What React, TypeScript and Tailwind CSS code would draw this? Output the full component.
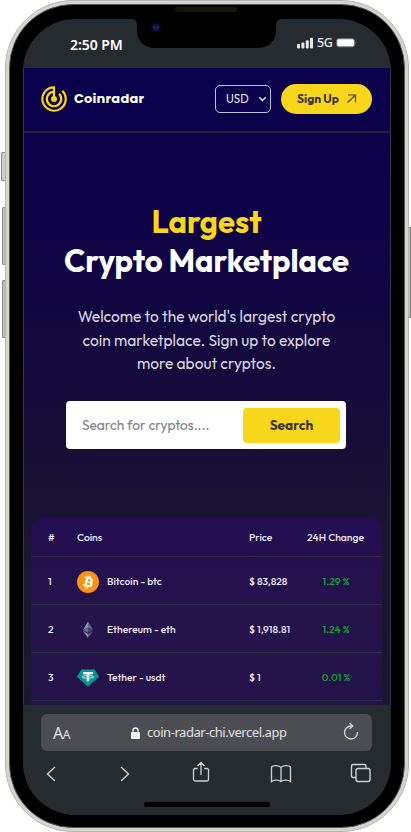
import React from "react";

const coins = [
  { rank: 1, name: "Bitcoin - btc", price: "$ 83,828", change: "1.29 %" },
  { rank: 2, name: "Ethereum - eth", price: "$ 1,918.81", change: "1.24 %" },
  { rank: 3, name: "Tether - usdt", price: "$ 1", change: "0.01 %" },
];

function Bitcoin() {
  return (
    <svg className="h-[22px] w-[22px]" viewBox="0 0 32 32">
      <circle cx="16" cy="16" r="16" fill="#f7931a" />
      <path
        fill="#fff"
        d="M23.2 14c.3-2.100-1.300-3.200-3.500-4l.7-2.800-1.700-.4-.7 2.700-1.400-.3.700-2.800-1.700-.4-.7 2.800-3.500-.9-.5 1.900 1.300.3c.7.200.8.600.8 1l-1.900 7.700c-.1.200-.3.500-.8.400l-1.200-.3-.9 2 3.400.8-.7 2.900 1.700.4.7-2.800 1.400.3-.7 2.800 1.700.4.7-2.800c2.900.5 5.100.3 6-2.300.8-2.100 0-3.300-1.500-4.100 1.100-.3 1.900-1 2.300-2.500zm-3.800 5.400c-.5 2.100-4.100 1-5.200.7l.9-3.800c1.200.3 4.900.9 4.300 3.100zm.5-5.400c-.5 1.900-3.400.9-4.400.7l.8-3.400c1 .2 4.100.7 3.600 2.700z"
      />
    </svg>
  );
}

function Ethereum() {
  return (
    <svg className="h-[22px] w-[22px]" viewBox="0 0 22 22">
      <path d="M11 2.500 5.900 11 11 8.800Z" fill="#8890b3" />
      <path d="M11 2.500 16.100 11 11 8.800Z" fill="#62688f" />
      <path d="M5.900 11 11 8.800V14Z" fill="#62688f" />
      <path d="M16.100 11 11 8.800V14Z" fill="#3d436c" />
      <path d="m5.900 12.100 5.100 3v4Z" fill="#8890b3" />
      <path d="m16.100 12.100-5.100 3v4Z" fill="#555b85" />
    </svg>
  );
}

function Tether() {
  return (
    <svg className="h-[22px] w-[22px]" viewBox="0 0 22 22">
      <path d="M4.300 2.600h13.400L22 9.800 11 19.700 0 9.800Z" fill="#0b9492" />
      <path d="M6.100 5.100h9.800v2.200h-3.700v7h-2.400v-7H6.100Z" fill="#fff" />
      <ellipse cx="11" cy="9.900" rx="5.800" ry="1.300" fill="none" stroke="#fff" strokeWidth=".8" />
    </svg>
  );
}

const icons = [Bitcoin, Ethereum, Tether];

function RadarLogo() {
  return (
    <svg className="h-[28px] w-[28px]" viewBox="0 0 28 28" fill="none" stroke="#f8d61c" strokeWidth="2.200">
      <path d="M14 14V2.300A11.700 11.700 0 1 0 22.300 5.700" />
      <path d="M14 6.800A7.200 7.200 0 1 0 19.100 8.900" />
      <circle cx="14" cy="14" r="3" fill="#f8d61c" stroke="none" />
    </svg>
  );
}

function StatusBar() {
  return (
    <div className="flex h-[49px] shrink-0 items-start justify-between bg-[#262b2f] pl-[47px] pr-[34px] pt-[15px]">
      <span className="font-['Noto_Sans',sans-serif] text-[14px] font-semibold leading-[21px] tracking-[-0.05px] text-white">
        2:50 PM
      </span>
      <div className="flex h-[18px] items-center">
        <svg className="h-[12px] w-[17px]" viewBox="0 0 17 12" fill="#e8e8e8">
          <rect x="0" y="7" width="3" height="4.500" rx="1" />
          <rect x="4.400" y="5.500" width="3" height="6" rx="1" />
          <rect x="8.800" y="3.300" width="3" height="8.200" rx="1" />
          <rect x="13" y="0.800" width="3" height="10.700" rx="1" />
        </svg>
        <span className="ml-[3px] w-[16px] font-['Noto_Sans',sans-serif] text-[12.500px] font-medium leading-[18px] tracking-[-0.5px] text-[#e8e8e8]">
          5G
        </span>
        <svg className="ml-[3px] h-[10px] w-[21px]" viewBox="0 0 21 10">
          <rect x=".8" y=".8" width="17.600" height="8" rx="2" fill="#fff" stroke="#777a7d" />
          <path d="M19.500 3.200q1.500 1.600 0 3.200Z" fill="#8c8f91" />
        </svg>
      </div>
    </div>
  );
}

function Navbar() {
  return (
    <div className="flex h-[65px] shrink-0 items-center border-b-2 border-[#282238] pb-[2px] pl-[16px] pr-[18px]">
      <RadarLogo />
      <span className="ml-[6px] font-[Poppins,Inter,sans-serif] text-[13px] font-bold tracking-[0.2px] text-white">Coinradar</span>
      <div className="ml-auto flex items-center gap-[10px]">
        <div className="flex h-[28px] w-[56px] items-center justify-between rounded-[5px] border-[1.500px] border-[#c4c0d6] pl-[10px] pr-[3px]">
          <span className="text-[11.500px] text-[#e8e6f0]">USD</span>
          <svg className="h-[8px] w-[9px]" viewBox="0 0 9 8" fill="none" stroke="#e8e6f0" strokeWidth="1.500">
            <path d="m1.300 2.300 3.200 3.200 3.200-3.200" />
          </svg>
        </div>
        <div className="flex h-[30px] w-[91px] items-center justify-between rounded-full bg-[#f8d61c] pl-[16px] pr-[15px]">
          <span className="text-[12px] font-bold text-[#383431]">Sign Up</span>
          <svg className="h-[11px] w-[11px]" viewBox="0 0 11 11" fill="none" stroke="#4c462e" strokeWidth="1.200">
            <path d="M2 2h7.500v7.500M9.500 2 1.500 9.500" />
          </svg>
        </div>
      </div>
    </div>
  );
}

function Hero() {
  return (
    <div className="flex h-[385px] shrink-0 flex-col items-center pr-px pt-[69px] text-center">
      <h1 className="whitespace-nowrap text-[31px] font-bold leading-[39px] text-white">
        <span className="block text-[#f8d61c]">Largest</span>
        <span className="block">Crypto Marketplace</span>
      </h1>
      <p className="mt-[25px] whitespace-nowrap text-[15.500px] leading-[23.700px] text-[#d8d6df]">
        <span className="block">Welcome to the world's largest crypto</span>
        <span className="block">coin marketplace. Sign up to explore</span>
        <span className="block">more about cryptos.</span>
      </p>
      <div className="mr-px mt-[25px] flex h-[48px] w-[280px] items-center rounded-[4px] bg-white pl-[16px] pr-[6px]">
        <span className="text-[13.700px] text-[#808080]">Search for cryptos....</span>
        <div className="ml-auto flex h-[35px] w-[97px] items-center justify-center rounded-[4px] bg-[#f8d61c] text-[13.600px] font-bold text-[#383431]">
          Search
        </div>
      </div>
    </div>
  );
}

function CoinTable() {
  return (
    <div className="ml-[7px] mr-[8px] flex min-h-0 flex-1 flex-col overflow-hidden rounded-t-[14px] bg-[linear-gradient(#230d52,#25134a_50%,#24124b)] text-[10.300px] font-medium text-[#ece9f3]">
      <div className="grid h-[39px] shrink-0 grid-cols-[29px_172px_58px_1fr] items-center border-b border-[#302a40] pl-[17px] pt-px">
        <span>#</span>
        <span>Coins</span>
        <span>Price</span>
        <span className="whitespace-nowrap">24H Change</span>
      </div>
      {coins.map((c, i) => {
        const Icon = icons[i];
        return (
          <div
            key={c.rank}
            className="grid h-[48px] shrink-0 grid-cols-[29px_30px_142px_58px_58px] items-center border-b border-[#302a40] pl-[17px] pt-[2px]"
          >
            <span>{c.rank}</span>
            <Icon />
            <span>{c.name}</span>
            <span className="whitespace-nowrap">{c.price}</span>
            <span className="text-center text-[#14a832]">{c.change}</span>
          </div>
        );
      })}
    </div>
  );
}

function BrowserBar() {
  return (
    <div className="flex h-[110px] shrink-0 flex-col bg-[#262b2f] pt-[9px]">
      <div className="ml-[18px] mr-[19px] flex h-[37px] shrink-0 items-center rounded-[6px] bg-[#4b4d52] pl-[12px] pr-[13px] font-['Noto_Sans',sans-serif] text-[#e2e2e3]">
        <span className="w-[78px] text-[16px] tracking-[-0.5px]">
          A<span className="text-[12px]">A</span>
        </span>
        <svg className="h-[12px] w-[9px]" viewBox="0 0 9 12">
          <rect x="0" y="5" width="9" height="7" rx="1" fill="#efefef" />
          <path d="M2 5.500V3.500a2.500 2.500 0 0 1 5 0v2" fill="none" stroke="#efefef" strokeWidth="1.300" />
        </svg>
        <span className="ml-[7px] whitespace-nowrap text-[13px] tracking-[-0.45px]">coin-radar-chi.vercel.app</span>
        <svg className="mb-[3px] ml-auto h-[18px] w-[16px]" viewBox="0 0 16 18" fill="none" stroke="#d4d4d5" strokeWidth="1.300">
          <path d="M8.500 4A6.500 6.500 0 1 0 14.500 10M6.500 1l3.300 3-3.300 3" />
        </svg>
      </div>
      <div className="flex items-center pl-[22px] pt-[10px] text-[#d0d1d2]">
        <svg className="h-[22px] w-[12px]" viewBox="0 0 12 22" fill="none" stroke="currentColor" strokeWidth="1.400">
          <path d="M10 5 2.500 12l7.500 7" />
        </svg>
        <svg className="ml-[62px] h-[22px] w-[12px]" viewBox="0 0 12 22" fill="none" stroke="currentColor" strokeWidth="1.400">
          <path d="m2 5 7.500 7L2 19" />
        </svg>
        <svg className="ml-[61px] h-[23px] w-[18px]" viewBox="0 0 18 23" fill="none" stroke="currentColor" strokeWidth="1.300">
          <path d="M5.700 7.500H3q-1.500 0-1.500 1.500v9.500Q1.500 20 3 20h12q1.500 0 1.500-1.500V9q0-1.500-1.500-1.500h-2.700M9 14V2M5.500 5 9 1.500 12.500 5" />
        </svg>
        <svg className="ml-[60px] h-[22px] w-[22px]" viewBox="0 0 22 22" fill="none" stroke="currentColor" strokeWidth="1.300">
          <path d="M11 19.500V5.500C9.500 3 3 3 1.500 5v14.500c2-1.800 7.500-1.800 9.500 0 2-1.800 7.500-1.800 9.500 0V5C19 3 12.500 3 11 5.500" />
        </svg>
        <svg className="ml-[58px] h-[22px] w-[21px]" viewBox="0 0 21 22" fill="none" stroke="currentColor" strokeWidth="1.400">
          <rect x="6" y="6.500" width="14" height="13" rx="2" />
          <path d="M6 15.500H3q-1.500 0-1.500-1.500V4Q1.500 2.500 3 2.500h11.500Q16 2.500 16 4v2.500" />
        </svg>
      </div>
      <div className="mx-auto mt-[18px] h-[5px] w-[126px] rounded-full bg-black" />
    </div>
  );
}

export default function App() {
  return (
    <div className="relative h-[832px] w-[411px] overflow-hidden bg-white font-[Outfit,Lato,sans-serif]">
      <div className="absolute left-[1px] top-[152px] h-[29px] w-[6px] rounded-l-[1px] border border-[#8d8d8d] bg-[#cecece]" />
      <div className="absolute left-[2px] top-[207px] h-[58px] w-[5px] rounded-l-[1px] border border-[#8d8d8d] bg-[#bdbdbd]" />
      <div className="absolute left-[2px] top-[280px] h-[58px] w-[5px] rounded-l-[1px] border border-[#8d8d8d] bg-[#bdbdbd]" />
      <div className="absolute left-[406px] top-[227px] h-[91px] w-[5px] border border-[#808080] bg-[#bdbdbd]" />
      <div className="relative ml-[5px] h-[832px] w-[404px] rounded-[68px] border border-[#b5b5b3] bg-[#d5d4d1] p-[3px]">
        <div className="h-full rounded-[64px] border border-[#555452] bg-black px-[13px] pb-[12px] pt-[14px]">
          <div className="flex h-full flex-col overflow-hidden rounded-[52px] bg-black">
            <StatusBar />
            <div className="flex h-[637px] flex-col border-x border-[#38334f] bg-[linear-gradient(#0b004d_0%,#0d0148_20%,#160d39_55%,#1b1530_75%,#1a1730_100%)]">
              <Navbar />
              <Hero />
              <CoinTable />
            </div>
            <BrowserBar />
          </div>
        </div>
      </div>
      <svg className="absolute left-[132px] top-[18px] h-[31px] w-[150px]" viewBox="0 0 150 31">
        <path d="M0 0h150v1q-6 0-6 6v5c0 11-7 18-19 18H24C12 30 5 23 5 12V7q0-6-5-6Z" fill="#000" />
        <circle cx="24" cy="9.500" r="6" fill="#08060f" />
        <circle cx="24" cy="9.500" r="3.800" fill="#10104a" />
        <circle cx="22.400" cy="9.500" r="1" fill="#29299b" />
        <circle cx="25.600" cy="9.500" r="1" fill="#29299b" />
      </svg>
      <div className="absolute left-[175px] top-[7px] h-[5px] w-[62px] rounded-full bg-[#141414]" />
    </div>
  );
}
